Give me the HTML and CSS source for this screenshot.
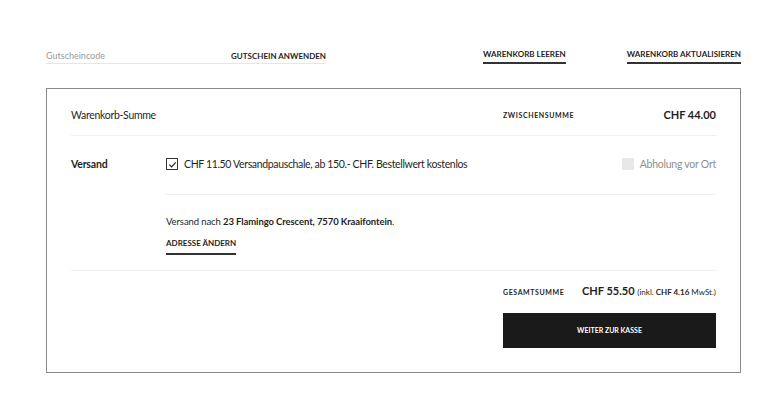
FILE: index.html
```html
<!DOCTYPE html>
<html lang="de">
  <head>
    <meta charset="UTF-8" />
    <meta name="viewport" content="width=device-width, initial-scale=1.0" />
    <title>Warenkorb</title>
    <link rel="stylesheet" href="styles.css">
  </head>
  <body>
    <div class="cart">
      <div class="actions">
        <form class="coupon">
          <input type="text" class="coupon-input" placeholder="Gutscheincode" />
          <button type="button" class="coupon-apply">Gutschein anwenden</button>
        </form>
        <div class="cart-buttons">
          <a href="#" class="text-link">Warenkorb leeren</a>
          <a href="#" class="text-link">Warenkorb aktualisieren</a>
        </div>
      </div>

      <div class="totals">
        <div class="row row-subtotal">
          <div class="title">Warenkorb-Summe</div>
          <div class="sum">
            <span class="sum-label">Zwischensumme</span>
            <span class="sum-value">CHF 44.00</span>
          </div>
        </div>

        <div class="row row-shipping">
          <div class="label">Versand</div>
          <div class="shipping">
            <div class="options">
              <label class="option">
                <span class="check checked">
                  <svg viewBox="0 0 10 10" width="9" height="9">
                    <path d="M1.5 5.2 L4 7.6 L8.6 2.6" fill="none" stroke="#222" stroke-width="1.3" />
                  </svg>
                </span>
                CHF 11.50 Versandpauschale, ab 150.- CHF. Bestellwert kostenlos
              </label>
              <label class="option option-disabled">
                <span class="check disabled"></span>
                Abholung vor Ort
              </label>
            </div>
            <div class="address">
              <p>Versand nach <strong>23 Flamingo Crescent, 7570 Kraaifontein</strong>.</p>
              <a href="#" class="text-link address-link">Adresse ändern</a>
            </div>
          </div>
        </div>

        <div class="row row-total">
          <div class="checkout">
            <div class="sum">
              <span class="sum-label">Gesamtsumme</span>
              <span class="total-value">CHF 55.50 <small>(inkl. <b>CHF 4.16</b> MwSt.)</small></span>
            </div>
            <a href="#" class="checkout-button">Weiter zur Kasse</a>
          </div>
        </div>
      </div>
    </div>
  </body>
</html>
```

FILE: styles.css
```css
:root {
  --text-color: #1f1f1f;
  --muted: #8f8f8f;
  --line: #efefef;
}

body {
  margin: 0;
  background: #ffffff;
  font-family: Lato, "Noto Sans", sans-serif;
  color: var(--text-color);
}

.cart {
  width: 695px;
  padding: 48px 0 0 46px;
}

.actions {
  display: flex;
  justify-content: space-between;
  align-items: flex-start;
  margin-bottom: 24px;
}

.coupon {
  display: flex;
  width: 280px;
  margin: 0;
  border-bottom: 1px solid #e6e6e6;
}

.coupon-input {
  width: 185px;
  height: 14px;
  padding: 0 0 1px;
  border: none;
  outline: none;
  font-family: inherit;
  font-size: 9px;
  color: var(--text-color);
}

.coupon-input::placeholder {
  color: #9a9a9a;
}

.coupon-apply {
  flex: 1;
  padding: 0;
  border: none;
  background: none;
  text-align: right;
  white-space: nowrap;
  font-family: inherit;
  font-size: 8px;
  font-weight: bold;
  text-transform: uppercase;
  line-height: 14px;
  color: var(--text-color);
}

.cart-buttons {
  display: flex;
  gap: 61px;
}

.text-link {
  display: inline-block;
  padding-bottom: 1px;
  border-bottom: 2px solid #333;
  font-size: 8px;
  font-weight: bold;
  text-transform: uppercase;
  line-height: 13px;
  white-space: nowrap;
  color: var(--text-color);
  text-decoration: none;
}

.totals {
  border: 1px solid #8a8a8a;
  padding: 0 24px;
}

.row {
  border-bottom: 1px solid var(--line);
}

.row:last-child {
  border-bottom: none;
}

.row-subtotal {
  display: flex;
  justify-content: space-between;
  align-items: center;
  padding: 17px 0 11px;
  line-height: 18px;
}

.title {
  font-size: 10.5px;
  letter-spacing: -0.3px;
}

.sum {
  display: flex;
  justify-content: space-between;
  align-items: center;
  width: 213px;
}

.sum-label {
  font-size: 7px;
  font-weight: bold;
  text-transform: uppercase;
  letter-spacing: 0.6px;
}

.sum-value {
  font-size: 11px;
  font-weight: bold;
}

.row-shipping {
  display: grid;
  grid-template-columns: 95px 1fr;
}

.label {
  padding-top: 20px;
  font-size: 10.5px;
  font-weight: bold;
  letter-spacing: -0.2px;
  line-height: 16px;
}

.options {
  display: flex;
  justify-content: space-between;
  padding: 20px 0 22px;
  border-bottom: 1px solid var(--line);
}

.option {
  display: flex;
  align-items: center;
  gap: 6px;
  font-size: 10.5px;
  letter-spacing: -0.35px;
  line-height: 16px;
}

.option-disabled {
  color: var(--muted);
  letter-spacing: -0.25px;
}

.check {
  display: flex;
  align-items: center;
  justify-content: center;
  width: 10px;
  height: 10px;
  box-sizing: content-box;
}

.check.checked {
  border: 1px solid #333;
}

.check.disabled {
  width: 12px;
  height: 12px;
  background: #e6e8e8;
}

.address {
  padding: 20px 0 15px;
}

.address p {
  margin: 0 0 1px;
  font-size: 9.5px;
  letter-spacing: -0.1px;
  line-height: 14px;
}

.address-link {
  padding-bottom: 3px;
}

.row-total {
  display: flex;
  justify-content: flex-end;
  padding: 13px 0 24px;
}

.checkout {
  width: 213px;
}

.total-value {
  font-size: 11px;
  font-weight: bold;
  line-height: 14px;
  white-space: nowrap;
}

.total-value small {
  font-size: 8px;
  font-weight: normal;
}

.checkout-button {
  display: block;
  margin-top: 14px;
  height: 35px;
  background: #1a1a1a;
  color: #ffffff;
  text-align: center;
  line-height: 35px;
  font-size: 7px;
  font-weight: bold;
  text-transform: uppercase;
  text-decoration: none;
}
```
